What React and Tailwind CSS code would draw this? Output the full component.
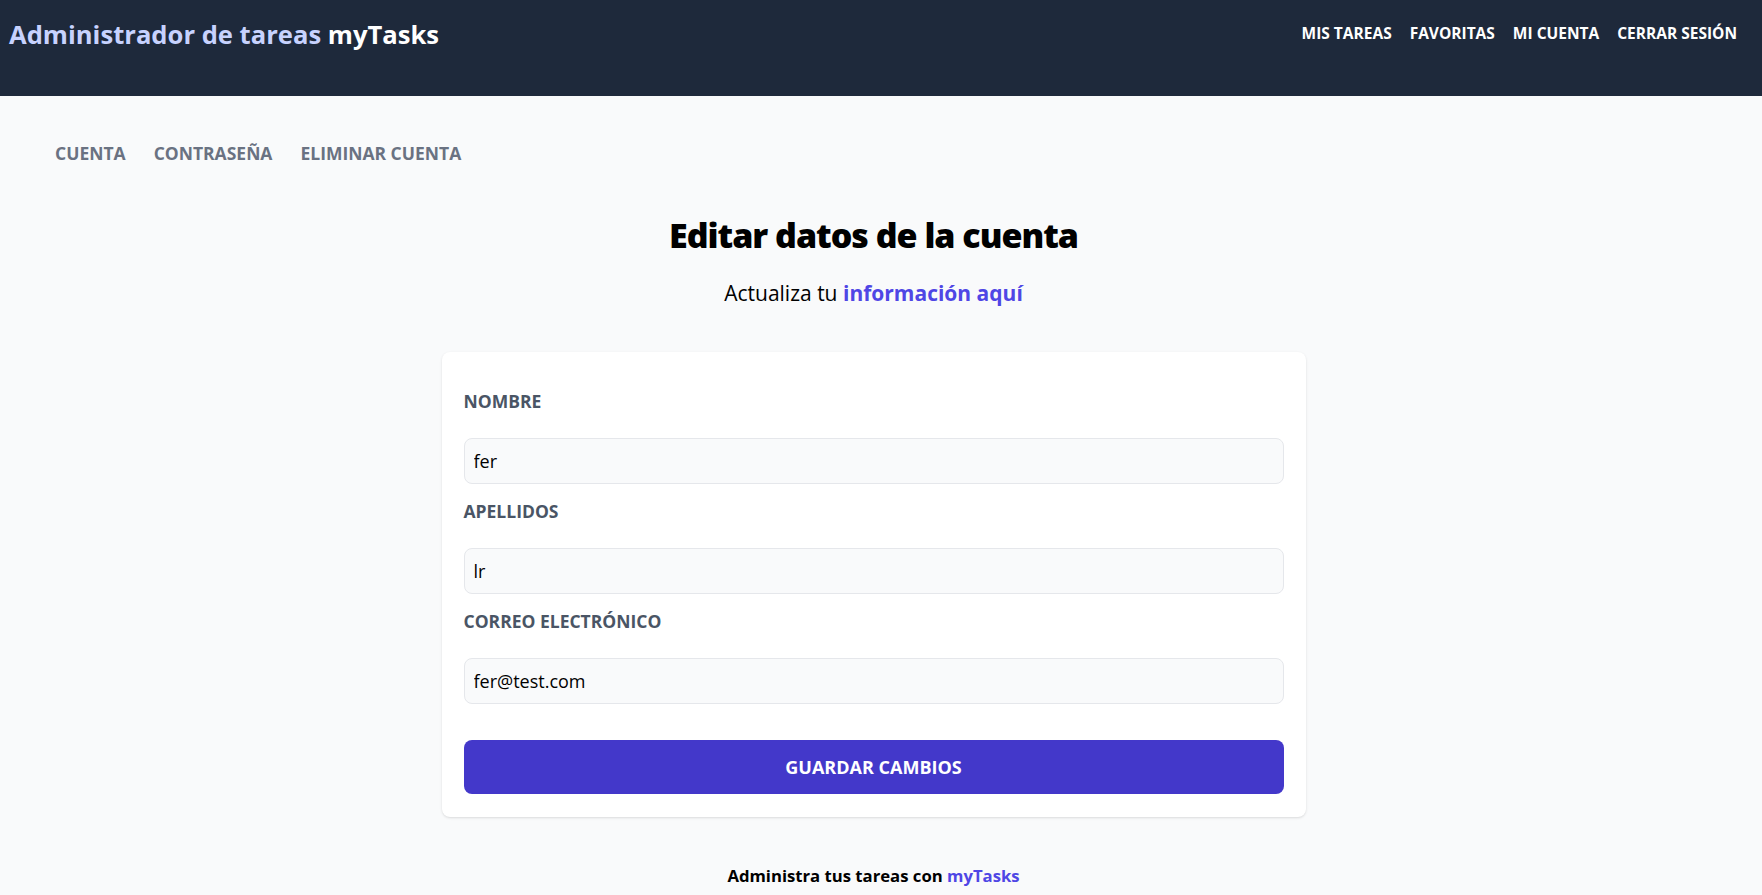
import { useState } from 'react'

const fields = [
  { id: 'nombre', label: 'Nombre', type: 'text', value: 'fer' },
  { id: 'apellidos', label: 'Apellidos', type: 'text', value: 'lr' },
  { id: 'email', label: 'Correo Electrónico', type: 'email', value: 'fer@test.com' },
]

function Header() {
  return (
    <header className="h-24 bg-[#1e293b] flex justify-between items-start pl-[9px] pr-[25px]">
      <h1 className="pt-[19px] text-[25.6px] leading-8 font-bold text-[#c7d2fe]">
        Administrador de tareas <span className="text-white">myTasks</span>
      </h1>
      <nav className="pt-[21px] flex gap-[18px] text-[15.5px] leading-6 font-bold uppercase text-white">
        <a href="#">Mis Tareas</a>
        <a href="#">Favoritas</a>
        <a href="#">Mi Cuenta</a>
        <a href="#">Cerrar Sesión</a>
      </nav>
    </header>
  )
}

export default function App() {
  const [form, setForm] = useState(
    Object.fromEntries(fields.map((f) => [f.id, f.value])),
  )

  return (
    <div className="min-h-screen bg-[#f9fafb] font-['Open_Sans',sans-serif]">
      <Header />
      <main>
        <nav className="pl-[55px] pt-[43px] flex gap-[28px] text-[17.5px] leading-7 font-bold uppercase text-gray-500">
          <a href="#">Cuenta</a>
          <a href="#">Contraseña</a>
          <a href="#">Eliminar Cuenta</a>
        </nav>

        <div className="pr-[15px]">
          <h2 className="mt-[48px] text-center text-[34px] leading-10 font-extrabold tracking-[-0.03em] text-black">
            Editar datos de la cuenta
          </h2>
          <p className="mt-[24px] text-center text-[21px] leading-7 text-black">
            Actualiza tu{' '}
            <span className="font-bold text-[#4f46e5]">información aquí</span>
          </p>

          <form className="mx-auto mt-[45px] w-[864px] rounded-lg bg-white px-[22px] pt-[35px] pb-[23px] shadow">
            {fields.map((f, i) => (
              <div key={f.id} className={i > 0 ? 'mt-[13px]' : ''}>
                <label
                  htmlFor={f.id}
                  className="block text-[17.5px] leading-7 font-bold uppercase text-gray-600"
                >
                  {f.label}
                </label>
                <input
                  id={f.id}
                  type={f.type}
                  value={form[f.id]}
                  onChange={(e) => setForm({ ...form, [f.id]: e.target.value })}
                  className="mt-[23px] block w-full h-[46px] rounded-lg border border-gray-200 bg-gray-50 px-[9px] text-lg text-black"
                />
              </div>
            ))}
            <button
              type="submit"
              className="mt-[36px] h-[54px] w-full rounded-lg bg-[#4338ca] text-lg font-bold uppercase text-white"
            >
              Guardar Cambios
            </button>
          </form>

          <p className="mt-[45px] text-center text-[16.7px] leading-7 font-bold text-black">
            Administra tus tareas con <span className="text-[#4f46e5]">myTasks</span>
          </p>
        </div>
      </main>
    </div>
  )
}
